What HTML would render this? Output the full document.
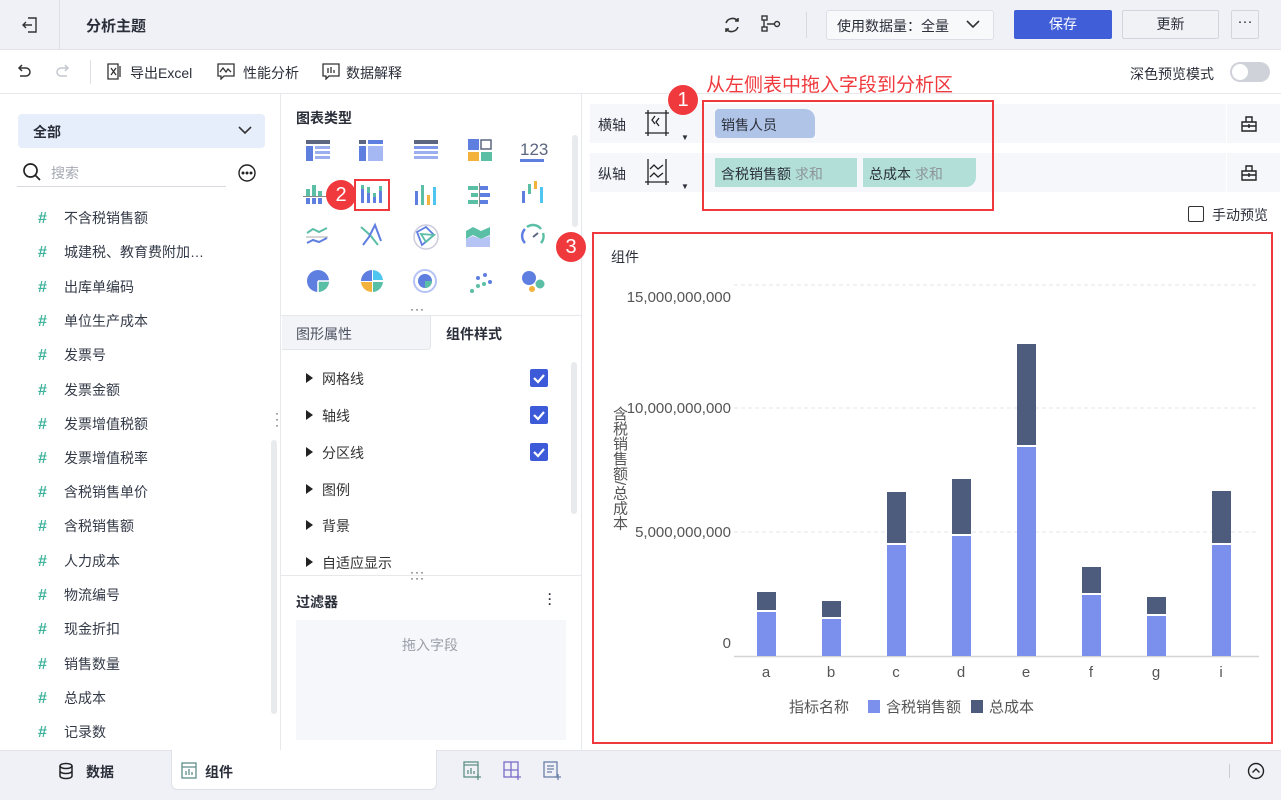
<!DOCTYPE html>
<html><head><meta charset="utf-8"><style>
*{margin:0;padding:0;box-sizing:border-box}
body{width:1281px;height:800px;overflow:hidden;position:relative;background:#fff;font-family:"Liberation Sans","Noto Sans CJK SC",sans-serif;color:#2b2f3a;font-size:14px}
.a{position:absolute}
.t{position:absolute;white-space:nowrap}
.fld{position:absolute;left:38px;font-size:14px;color:#333a47}
.fld b{display:inline-block;width:26px;color:#3fb39c;font-size:16px}
.badge{position:absolute;width:30px;height:30px;border-radius:50%;background:#f0393d;color:#fff;font-size:20px;text-align:center;line-height:30px}
.cb{position:absolute;width:18px;height:18px;background:#3d5bd8;border-radius:2px}
.set{position:absolute;left:306px;font-size:14px;color:#333}
.set:before{content:"";display:inline-block;border-left:7px solid #222;border-top:5px solid transparent;border-bottom:5px solid transparent;margin-right:9px;vertical-align:1px}
</style></head><body>
<!-- top bar -->
<div class="a" style="left:0;top:0;width:1281px;height:50px;background:#eff1f6;border-bottom:1px solid #e2e4ea"></div>
<div class="a" style="left:59px;top:0;width:1px;height:50px;background:#dcdfe6"></div>
<svg class="a" style="left:20px;top:15px" width="20" height="20" viewBox="0 0 20 20" fill="none" stroke="#333" stroke-width="1.4"><path d="M8 3h8v14H8M3 10h9M6 7l-3 3 3 3"/></svg>
<div class="t" style="left:86px;top:15px;font-size:15px;font-weight:bold">分析主题</div>
<svg class="a" style="left:722px;top:15px" width="20" height="20" viewBox="0 0 20 20" fill="none" stroke="#333" stroke-width="1.6"><path d="M4 8a7 7 0 0 1 12-2M16 12a7 7 0 0 1-12 2"/><path d="M16 3v3h-3M4 17v-3h3"/></svg>
<svg class="a" style="left:760px;top:14px" width="22" height="20" viewBox="0 0 22 20" fill="none" stroke="#333" stroke-width="1.4"><rect x="2" y="2" width="5" height="4"/><rect x="2" y="13" width="5" height="4"/><path d="M4 6v7M7 10h7"/><circle cx="17" cy="10" r="2.5"/></svg>
<div class="a" style="left:806px;top:12px;width:1px;height:26px;background:#d6d9e0"></div>
<div class="a" style="left:826px;top:10px;width:168px;height:30px;background:#f8f9fb;border:1px solid #dcdfe6;border-radius:3px"></div>
<div class="t" style="left:837px;top:16px;font-size:14px">使用数据量：全量</div>
<svg class="a" style="left:966px;top:19px" width="14" height="10" viewBox="0 0 14 10" fill="none" stroke="#333" stroke-width="1.6"><path d="M1 2l6 6 6-6"/></svg>
<div class="a" style="left:1014px;top:10px;width:98px;height:29px;background:#3f5ed8;border-radius:2px;color:#fff;text-align:center;line-height:29px;font-size:14px">保存</div>
<div class="a" style="left:1122px;top:10px;width:97px;height:29px;background:#f1f2f5;border:1px solid #d2d5dc;border-radius:2px;text-align:center;line-height:27px;font-size:14px">更新</div>
<div class="a" style="left:1231px;top:10px;width:28px;height:29px;border:1px solid #d2d5dc;border-radius:2px;text-align:center;line-height:22px;font-size:15px">···</div>
<!-- toolbar -->
<div class="a" style="left:0;top:93px;width:1281px;height:1px;background:#e6e8ec"></div>
<svg class="a" style="left:14px;top:62px" width="20" height="20" viewBox="0 0 20 20" fill="none" stroke="#333" stroke-width="1.5"><path d="M5 6h7a4 4 0 0 1 0 8H6M8 3L5 6l3 3"/></svg>
<svg class="a" style="left:53px;top:62px" width="20" height="20" viewBox="0 0 20 20" fill="none" stroke="#c4c7ce" stroke-width="1.5"><path d="M15 6H8a4 4 0 0 0 0 8h6M12 3l3 3-3 3"/></svg>
<div class="a" style="left:90px;top:60px;width:1px;height:24px;background:#dcdfe6"></div>
<svg class="a" style="left:106px;top:63px" width="16" height="17" viewBox="0 0 16 17" fill="none" stroke="#333" stroke-width="1.3"><path d="M2 1h10v15H2zM5 5l5 7M10 5l-5 7M14 3v11"/></svg>
<div class="t" style="left:130px;top:63px">导出Excel</div>
<svg class="a" style="left:217px;top:63px" width="18" height="17" viewBox="0 0 18 17" fill="none" stroke="#333" stroke-width="1.3"><path d="M1 1h16v12H7l-3 3v-3H1zM3 9l3-4 3 4 2-3 3 3"/></svg>
<div class="t" style="left:243px;top:63px">性能分析</div>
<svg class="a" style="left:322px;top:63px" width="18" height="17" viewBox="0 0 18 17" fill="none" stroke="#333" stroke-width="1.3"><path d="M1 1h16v12H7l-3 3v-3H1zM6 5v5M9 4v6M12 7v3"/></svg>
<div class="t" style="left:346px;top:63px">数据解释</div>
<div class="t" style="left:1130px;top:64px;font-size:14px">深色预览模式</div>
<div class="a" style="left:1230px;top:62px;width:40px;height:20px;border-radius:10px;background:#cfd2d8"></div>
<div class="a" style="left:1232px;top:64px;width:16px;height:16px;border-radius:50%;background:#fff"></div>
<div class="t" style="left:706px;top:70px;color:#f0393d;font-size:19px">从左侧表中拖入字段到分析区</div>
<!-- left panel -->
<div class="a" style="left:18px;top:114px;width:247px;height:34px;background:#e6eefb;border-radius:4px"></div>
<div class="t" style="left:33px;top:122px;font-size:14px;font-weight:bold">全部</div>
<svg class="a" style="left:238px;top:125px" width="14" height="10" viewBox="0 0 14 10" fill="none" stroke="#333" stroke-width="1.6"><path d="M1 2l6 6 6-6"/></svg>
<svg class="a" style="left:22px;top:162px" width="20" height="20" viewBox="0 0 20 20" fill="none" stroke="#222" stroke-width="1.7"><circle cx="8.5" cy="8.5" r="6.5"/><path d="M13 13l5 5"/></svg>
<div class="t" style="left:51px;top:163px;color:#a5a9b2">搜索</div>
<div class="a" style="left:17px;top:186px;width:209px;height:1px;background:#d6d9e0"></div>
<svg class="a" style="left:237px;top:163px" width="20" height="20" viewBox="0 0 20 20" fill="none" stroke="#222" stroke-width="1.4"><circle cx="10" cy="10" r="8"/><circle cx="6" cy="10" r=".8" fill="#222"/><circle cx="10" cy="10" r=".8" fill="#222"/><circle cx="14" cy="10" r=".8" fill="#222"/></svg>
<div class="fld" style="top:208px"><b>#</b>不含税销售额</div>
<div class="fld" style="top:242px"><b>#</b>城建税、教育费附加…</div>
<div class="fld" style="top:277px"><b>#</b>出库单编码</div>
<div class="fld" style="top:311px"><b>#</b>单位生产成本</div>
<div class="fld" style="top:345px"><b>#</b>发票号</div>
<div class="fld" style="top:380px"><b>#</b>发票金额</div>
<div class="fld" style="top:414px"><b>#</b>发票增值税额</div>
<div class="fld" style="top:448px"><b>#</b>发票增值税率</div>
<div class="fld" style="top:482px"><b>#</b>含税销售单价</div>
<div class="fld" style="top:516px"><b>#</b>含税销售额</div>
<div class="fld" style="top:551px"><b>#</b>人力成本</div>
<div class="fld" style="top:585px"><b>#</b>物流编号</div>
<div class="fld" style="top:619px"><b>#</b>现金折扣</div>
<div class="fld" style="top:654px"><b>#</b>销售数量</div>
<div class="fld" style="top:688px"><b>#</b>总成本</div>
<div class="fld" style="top:722px"><b>#</b>记录数</div>
<div class="a" style="left:271px;top:440px;width:6px;height:274px;background:#e9eaee;border-radius:3px"></div>
<div class="t" style="left:275px;top:410px;font-size:12px;line-height:6px;color:#333">·<br>·<br>·</div>
<div class="a" style="left:280px;top:94px;width:1px;height:656px;background:#e6e8ec"></div>
<!-- middle panel -->
<div class="t" style="left:296px;top:108px;font-weight:bold">图表类型</div>
<svg class="a" style="left:300px;top:135px" width="260" height="168" viewBox="0 0 260 168">
<g><rect x="6" y="5" width="24" height="4" fill="#5c6680"/><rect x="6" y="11" width="7" height="15" fill="#5f7fe0"/><rect x="15" y="11" width="15" height="3" fill="#9aaef0"/><rect x="15" y="16" width="15" height="3" fill="#9aaef0"/><rect x="15" y="21" width="15" height="3" fill="#9aaef0"/></g>
<g transform="translate(53,0)"><rect x="6" y="5" width="7" height="4" fill="#5c6680"/><rect x="15" y="5" width="15" height="4" fill="#5f7fe0"/><rect x="6" y="11" width="7" height="15" fill="#5f7fe0"/><rect x="15" y="11" width="15" height="15" fill="#a5b8f3"/></g>
<g transform="translate(108,0)"><rect x="6" y="5" width="24" height="4" fill="#5c6680"/><rect x="6" y="11" width="24" height="3" fill="#7d95ea"/><rect x="6" y="16" width="24" height="3" fill="#9aaef0"/><rect x="6" y="21" width="24" height="3" fill="#9aaef0"/></g>
<g transform="translate(162,0)"><rect x="6" y="4" width="11" height="11" fill="#5f7fe0"/><rect x="19" y="5" width="10" height="9" fill="none" stroke="#5c6680" stroke-width="1.5"/><rect x="6" y="17" width="11" height="9" fill="#f3b23c"/><rect x="19" y="17" width="11" height="9" fill="#5bbfa6"/></g>
<text x="220" y="20" font-size="17" fill="#5c6680" font-family="Liberation Sans">123</text><rect x="220" y="24" width="24" height="3" fill="#5f7fe0"/>
<g transform="translate(0,50)"><rect x="6" y="4" width="4" height="7" fill="#5bbfa6"/><rect x="12" y="0" width="4" height="11" fill="#5bbfa6"/><rect x="18" y="6" width="4" height="5" fill="#5bbfa6"/><rect x="6" y="13" width="4" height="6" fill="#5f7fe0"/><rect x="12" y="13" width="4" height="6" fill="#5f7fe0"/><rect x="18" y="13" width="4" height="6" fill="#5f7fe0"/><rect x="3" y="11" width="24" height="1" fill="#888"/></g>
<g transform="translate(59,46)"><rect x="2" y="8" width="3" height="14" fill="#5f7fe0"/><rect x="2" y="4" width="3" height="4" fill="#5bbfa6"/><rect x="8" y="12" width="3" height="10" fill="#5f7fe0"/><rect x="8" y="6" width="3" height="6" fill="#5bbfa6"/><rect x="14" y="16" width="3" height="6" fill="#5f7fe0"/><rect x="14" y="12" width="3" height="4" fill="#5bbfa6"/><rect x="20" y="10" width="3" height="12" fill="#5f7fe0"/><rect x="20" y="5" width="3" height="5" fill="#5bbfa6"/></g>
<rect x="55" y="45" width="34" height="30" fill="none" stroke="#f0393d" stroke-width="2"/>
<g transform="translate(114,48)"><rect x="1" y="8" width="3" height="14" fill="#5f7fe0"/><rect x="7" y="2" width="3" height="20" fill="#5bbfa6"/><rect x="13" y="12" width="3" height="10" fill="#f3b23c"/><rect x="19" y="4" width="3" height="18" fill="#4fc6f0"/></g>
<g transform="translate(166,48)"><rect x="2" y="3" width="10" height="4" fill="#5bbfa6"/><rect x="14" y="3" width="8" height="4" fill="#5f7fe0"/><rect x="5" y="10" width="7" height="4" fill="#5bbfa6"/><rect x="14" y="10" width="10" height="4" fill="#5f7fe0"/><rect x="2" y="17" width="10" height="4" fill="#5bbfa6"/><rect x="14" y="17" width="8" height="4" fill="#5f7fe0"/><rect x="13" y="0" width="1" height="24" fill="#888"/></g>
<g transform="translate(221,46)"><rect x="1" y="10" width="3" height="12" fill="#5f7fe0"/><rect x="7" y="3" width="3" height="10" fill="#5bbfa6"/><rect x="13" y="0" width="3" height="8" fill="#f3b23c"/><rect x="19" y="6" width="3" height="16" fill="#4fc6f0"/></g>
<g transform="translate(6,90)" fill="none" stroke-width="2"><path d="M1 8l6-4 6 3 8-4" stroke="#5bbfa6"/><path d="M1 18l6-3 6 2 8-4" stroke="#5f7fe0"/><path d="M0 12h22" stroke="#aaa" stroke-width="1"/></g>
<g transform="translate(60,88)" fill="none" stroke-width="2"><path d="M1 4l9 8 8 10" stroke="#5bbfa6"/><path d="M3 22l6-8 6-12 6 16" stroke="#5f7fe0"/></g>
<g transform="translate(112,88)" fill="none"><circle cx="14" cy="14" r="12" stroke="#ccd" stroke-width="1.5"/><path d="M5 9l9-5 8 8-12 10z" stroke="#5f7fe0" stroke-width="1.8"/><path d="M9 11l13 1-8 7z" stroke="#5bbfa6" stroke-width="1.8"/></g>
<g transform="translate(166,90)"><path d="M0 6l7-4 8 4 9-4v8l-9 4-8-4-7 4z" fill="#5bbfa6"/><path d="M0 14l7-3 8 3 9-3v11H0z" fill="#b5c3f5"/></g>
<g transform="translate(220,88)" fill="none" stroke-width="2.5"><path d="M5 20a10 10 0 0 1 0-14" stroke="#5f7fe0"/><path d="M7 4a10 10 0 0 1 14 2" stroke="#5bbfa6"/><path d="M23 10a10 10 0 0 1-2 10" stroke="#5bbfa6"/><path d="M13 14l5-4" stroke="#5c6680" stroke-width="2"/></g>
<g transform="translate(6,134)"><circle cx="12" cy="12" r="11" fill="#5f7fe0"/><path d="M12 12h11a11 11 0 0 1-11 11z" fill="#5bbfa6"/><path d="M12 12h11M12 12v11" stroke="#fff" stroke-width="1.5"/></g>
<g transform="translate(60,134)"><path d="M12 12V1a11 11 0 0 0-11 11z" fill="#5f7fe0"/><path d="M13 11V1a11 11 0 0 1 10 10z" fill="#4fc6f0"/><path d="M12 13H1a11 11 0 0 0 11 10z" fill="#f3b23c"/><path d="M13 13h10a11 11 0 0 1-10 10z" fill="#5bbfa6"/></g>
<g transform="translate(113,134)"><circle cx="12" cy="12" r="11" fill="none" stroke="#b5c3f5" stroke-width="2"/><circle cx="12" cy="12" r="7" fill="#5f7fe0"/><path d="M12 12h7a7 7 0 0 1-7 7z" fill="#5bbfa6"/></g>
<g transform="translate(168,136)"><circle cx="4" cy="20" r="2" fill="#5bbfa6"/><circle cx="10" cy="15" r="2" fill="#5bbfa6"/><circle cx="16" cy="13" r="2" fill="#5bbfa6"/><circle cx="10" cy="7" r="2" fill="#5f7fe0"/><circle cx="17" cy="4" r="2" fill="#5f7fe0"/><circle cx="22" cy="11" r="2" fill="#5f7fe0"/></g>
<g transform="translate(220,134)"><circle cx="9" cy="9" r="7" fill="#5f7fe0"/><circle cx="20" cy="15" r="4.5" fill="#5bbfa6"/><circle cx="12" cy="20" r="3" fill="#f3b23c"/></g>
</svg>
<div class="a" style="left:572px;top:135px;width:6px;height:92px;background:#e9eaee;border-radius:3px"></div>
<div class="t" style="left:410px;top:306px;font-size:12px;line-height:6px;letter-spacing:1px;color:#333">···<br>···</div>
<div class="a" style="left:281px;top:315px;width:300px;height:1px;background:#e6e8ec"></div>
<div class="a" style="left:282px;top:316px;width:149px;height:34px;background:#f3f4f7;border-right:1px solid #e3e5ea;border-bottom:1px solid #e3e5ea;border-radius:0 0 4px 0"></div>
<div class="t" style="left:296px;top:324px;color:#4c5261">图形属性</div>
<div class="t" style="left:446px;top:324px;font-weight:bold">组件样式</div>
<div class="set" style="top:369px">网格线</div>
<div class="set" style="top:406px">轴线</div>
<div class="set" style="top:443px">分区线</div>
<div class="set" style="top:480px">图例</div>
<div class="set" style="top:516px">背景</div>
<div class="set" style="top:553px">自适应显示</div>
<div class="cb" style="left:530px;top:369px"></div><div class="cb" style="left:530px;top:406px"></div><div class="cb" style="left:530px;top:443px"></div>
<svg class="a" style="left:530px;top:369px" width="18" height="100" viewBox="0 0 18 100" fill="none" stroke="#fff" stroke-width="2.2"><path d="M4 9l4 4 6-7"/><path d="M4 46l4 4 6-7"/><path d="M4 83l4 4 6-7"/></svg>
<div class="a" style="left:571px;top:362px;width:6px;height:152px;background:#e9eaee;border-radius:3px"></div>
<div class="t" style="left:410px;top:569px;font-size:12px;line-height:6px;letter-spacing:1px;color:#333">···<br>···</div>
<div class="a" style="left:281px;top:575px;width:300px;height:1px;background:#e6e8ec"></div>
<div class="t" style="left:296px;top:592px;font-weight:bold">过滤器</div>
<div class="t" style="left:548px;top:592px;font-size:12px;line-height:5px;font-weight:bold">·<br>·<br>·</div>
<div class="a" style="left:296px;top:620px;width:270px;height:120px;background:#f6f7fa"></div>
<div class="t" style="left:402px;top:635px;color:#9a9ea8">拖入字段</div>
<div class="a" style="left:581px;top:94px;width:1px;height:656px;background:#e6e8ec"></div>
<!-- axis shelves -->
<div class="a" style="left:590px;top:104px;width:690px;height:39px;background:#f6f7fb"></div>
<div class="a" style="left:590px;top:153px;width:690px;height:39px;background:#f6f7fb"></div>
<div class="a" style="left:1226px;top:104px;width:1px;height:39px;background:#fff"></div>
<div class="a" style="left:1226px;top:153px;width:1px;height:39px;background:#fff"></div>
<div class="t" style="left:598px;top:115px">横轴</div>
<div class="t" style="left:598px;top:164px">纵轴</div>
<svg class="a" style="left:643px;top:110px" width="28" height="26" viewBox="0 0 28 26" fill="none" stroke="#222" stroke-width="1.3"><path d="M2 3h24M2 23h24M5 0v26M23 0v26M12 6l-3 4 3 4M16 8l-3 4 3 4"/></svg>
<svg class="a" style="left:643px;top:159px" width="28" height="26" viewBox="0 0 28 26" fill="none" stroke="#222" stroke-width="1.3"><path d="M2 23h24M5 0v26M23 0v26M7 10l4-4 4 4 5-4M7 18l4-4 4 4 5-4"/></svg>
<div class="t" style="left:681px;top:133px;font-size:8px">▼</div>
<div class="t" style="left:681px;top:182px;font-size:8px">▼</div>
<div class="a" style="left:715px;top:109px;width:100px;height:29px;background:#b0c4e8;border-radius:4px 10px 4px 4px"></div>
<div class="t" style="left:721px;top:115px">销售人员</div>
<div class="a" style="left:715px;top:158px;width:142px;height:29px;background:#b2e0d9"></div>
<div class="t" style="left:721px;top:164px">含税销售额 <span style="color:#8d939c">求和</span></div>
<div class="a" style="left:863px;top:158px;width:113px;height:29px;background:#b2e0d9;border-radius:0 0 10px 0"></div>
<div class="t" style="left:869px;top:164px">总成本 <span style="color:#8d939c">求和</span></div>
<svg class="a" style="left:1240px;top:115px" width="18" height="18" viewBox="0 0 18 18" fill="none" stroke="#222" stroke-width="1.4"><path d="M6 2h6v5H6zM2 7h14v9H2zM2 11h14M9 9v4"/></svg>
<svg class="a" style="left:1240px;top:164px" width="18" height="18" viewBox="0 0 18 18" fill="none" stroke="#222" stroke-width="1.4"><path d="M6 2h6v5H6zM2 7h14v9H2zM2 11h14M9 9v4"/></svg>
<div class="a" style="left:702px;top:100px;width:292px;height:111px;border:2px solid #f0393d"></div>
<div class="badge" style="left:668px;top:85px">1</div>
<div class="a" style="left:1188px;top:206px;width:16px;height:16px;border:1.5px solid #333;border-radius:2px"></div>
<div class="t" style="left:1212px;top:205px">手动预览</div>
<!-- chart -->
<div class="a" style="left:592px;top:232px;width:681px;height:512px;border:2px solid #f0393d"></div>
<div class="badge" style="left:556px;top:232px">3</div>
<div class="badge" style="left:326px;top:180px">2</div>
<div class="t" style="left:611px;top:247px;font-size:14px">组件</div>
<div class="a" style="left:610px;top:406px;writing-mode:vertical-rl;font-size:15px;color:#555;line-height:18px">含税销售额/总成本</div>
<svg class="a" style="left:594px;top:234px" width="677" height="508" viewBox="594 234 677 508" font-family="Liberation Sans" font-size="15" fill="#555">
<g stroke="#e3e4e8" stroke-dasharray="4 3"><path d="M734 285H1259M734 408H1259M734 532H1259"/></g>
<path d="M734 656.5H1259" stroke="#d3d4d8" stroke-width="1.5"/>
<g text-anchor="end"><text x="731" y="302">15,000,000,000</text><text x="731" y="413">10,000,000,000</text><text x="731" y="537">5,000,000,000</text><text x="731" y="648">0</text></g>
<g fill="#7b8fec"><rect x="757" y="612" width="19" height="44"/><rect x="822" y="619" width="19" height="37"/><rect x="887" y="545" width="19" height="111"/><rect x="952" y="536" width="19" height="120"/><rect x="1017" y="447" width="19" height="209"/><rect x="1082" y="595" width="19" height="61"/><rect x="1147" y="616" width="19" height="40"/><rect x="1212" y="545" width="19" height="111"/></g>
<g fill="#4d5b7d"><rect x="757" y="592" width="19" height="18"/><rect x="822" y="601" width="19" height="16"/><rect x="887" y="492" width="19" height="51"/><rect x="952" y="479" width="19" height="55"/><rect x="1017" y="344" width="19" height="101"/><rect x="1082" y="567" width="19" height="26"/><rect x="1147" y="597" width="19" height="17"/><rect x="1212" y="491" width="19" height="52"/></g>
<g text-anchor="middle"><text x="766" y="677">a</text><text x="831" y="677">b</text><text x="896" y="677">c</text><text x="961" y="677">d</text><text x="1026" y="677">e</text><text x="1091" y="677">f</text><text x="1156" y="677">g</text><text x="1221" y="677">i</text></g>
<text x="789" y="712" font-family="Liberation Sans,Noto Sans CJK SC">指标名称</text>
<rect x="868" y="700" width="12" height="13" fill="#7b8fec"/><text x="886" y="712" font-family="Liberation Sans,Noto Sans CJK SC">含税销售额</text>
<rect x="971" y="700" width="12" height="13" fill="#4d5b7d"/><text x="989" y="712" font-family="Liberation Sans,Noto Sans CJK SC">总成本</text>
</svg>
<!-- bottom bar -->
<div class="a" style="left:0;top:750px;width:1281px;height:50px;background:#eff1f6;border-top:1px solid #e2e4ea"></div>
<div class="a" style="left:171px;top:750px;width:266px;height:40px;background:#fff;border:1px solid #dde0e6;border-top:none;border-radius:0 0 6px 6px"></div>
<svg class="a" style="left:58px;top:762px" width="16" height="18" viewBox="0 0 16 18" fill="none" stroke="#222" stroke-width="1.5"><ellipse cx="8" cy="4" rx="6" ry="2.5"/><path d="M2 4v10c0 1.4 2.7 2.5 6 2.5s6-1.1 6-2.5V4M2 9c0 1.4 2.7 2.5 6 2.5s6-1.1 6-2.5"/></svg>
<div class="t" style="left:86px;top:762px;font-weight:bold">数据</div>
<svg class="a" style="left:181px;top:762px" width="16" height="17" viewBox="0 0 16 17" fill="none" stroke="#5f8f88" stroke-width="1.3"><rect x="1" y="1" width="14" height="15"/><path d="M1 5h14M5 13V9M8 13V7M11 13v-3"/></svg>
<div class="t" style="left:205px;top:762px;font-weight:bold">组件</div>
<svg class="a" style="left:462px;top:760px" width="110" height="22" viewBox="0 0 110 22" fill="none" stroke-width="1.3"><g stroke="#5f8f88"><rect x="2" y="2" width="14" height="15"/><path d="M2 5h14M6 14v-4M9 14V8M12 14v-3M16 14v6M13 17h6"/></g><g stroke="#7c6cc9"><rect x="42" y="2" width="14" height="15"/><path d="M42 10h14M49 2v15M56 14v6M53 17h6"/></g><g stroke="#6a7fa8"><rect x="82" y="2" width="13" height="15"/><path d="M85 6h7M85 9h7M85 12h5M96 14v6M93 17h6"/></g></svg>
<div class="a" style="left:1229px;top:764px;width:1px;height:14px;background:#ccc"></div>
<svg class="a" style="left:1247px;top:762px" width="18" height="18" viewBox="0 0 18 18" fill="none" stroke="#222" stroke-width="1.4"><circle cx="9" cy="9" r="7.5"/><path d="M5.5 10.5L9 7l3.5 3.5"/></svg>
</body></html>
